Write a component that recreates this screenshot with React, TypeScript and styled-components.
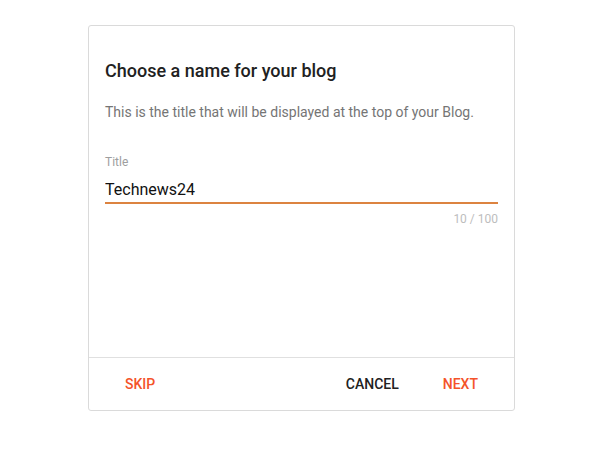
import React from "react";
import styled, { createGlobalStyle } from "styled-components";

const GlobalStyle = createGlobalStyle`
    html, body {
        margin: 0;
        padding: 0;
        background: #fff;
        font-family: Roboto, "Liberation Sans", Arial, sans-serif;
    }
`

const Page = styled.div`
    display: flex;
    justify-content: center;
    padding-top: 25px;
`

const Dialog = styled.div`
    width: 425px;
    border: 1px solid #dadada;
    border-radius: 3px;
    background: #fff;
    display: flex;
    flex-direction: column;
`

const Body = styled.div`
    height: 331px;
    box-sizing: border-box;
    padding: 33px 16px 0;
    display: flex;
    flex-direction: column;
`

const Heading = styled.h2`
    margin: 0;
    font-size: 18px;
    line-height: 24px;
    font-weight: 500;
    color: #212121;
`

const Subtitle = styled.p`
    margin: 19px 0 0;
    font-size: 14px;
    line-height: 20px;
    color: #757575;
`

const Field = styled.div`
    margin-top: 32px;
    display: flex;
    flex-direction: column;
`

const FieldLabel = styled.label`
    font-size: 12px;
    line-height: 16px;
    color: #9e9e9e;
`

const InputRow = styled.div`
    margin-top: 8px;
    border-bottom: 2px solid #dc8340;
`

const Input = styled.input`
    display: block;
    width: 100%;
    margin: 0;
    padding: 0;
    border: none;
    outline: none;
    font-family: inherit;
    font-size: 16px;
    line-height: 24px;
    height: 24px;
    color: #111;
    background: transparent;
`

const Counter = styled.div`
    margin-top: 7px;
    text-align: right;
    font-size: 12px;
    line-height: 16px;
    color: #bdbdbd;
`

const Footer = styled.div`
    height: 52px;
    border-top: 1px solid #e0e0e0;
    padding: 0 16px 0 16px;
    display: flex;
    align-items: center;
    gap: 4px;
`

const Spacer = styled.div`
    flex: 1;
`

const Button = styled.button<{ $accent?: boolean }>`
    border: none;
    background: transparent;
    padding: 0 20px;
    height: 36px;
    font-family: inherit;
    font-size: 14px;
    font-weight: 500;
    text-transform: uppercase;
    color: ${p => p.$accent ? "#f4532a" : "#212121"};
    cursor: pointer;
`

const App = () => {
    return <>
        <GlobalStyle />
        <Page>
            <Dialog>
                <Body>
                    <Heading>Choose a name for your blog</Heading>
                    <Subtitle>This is the title that will be displayed at the top of your Blog.</Subtitle>
                    <Field>
                        <FieldLabel>Title</FieldLabel>
                        <InputRow>
                            <Input defaultValue="Technews24" />
                        </InputRow>
                        <Counter>10 / 100</Counter>
                    </Field>
                </Body>
                <Footer>
                    <Button $accent>Skip</Button>
                    <Spacer />
                    <Button>Cancel</Button>
                    <Button $accent>Next</Button>
                </Footer>
            </Dialog>
        </Page>
    </>
}

export default App;
